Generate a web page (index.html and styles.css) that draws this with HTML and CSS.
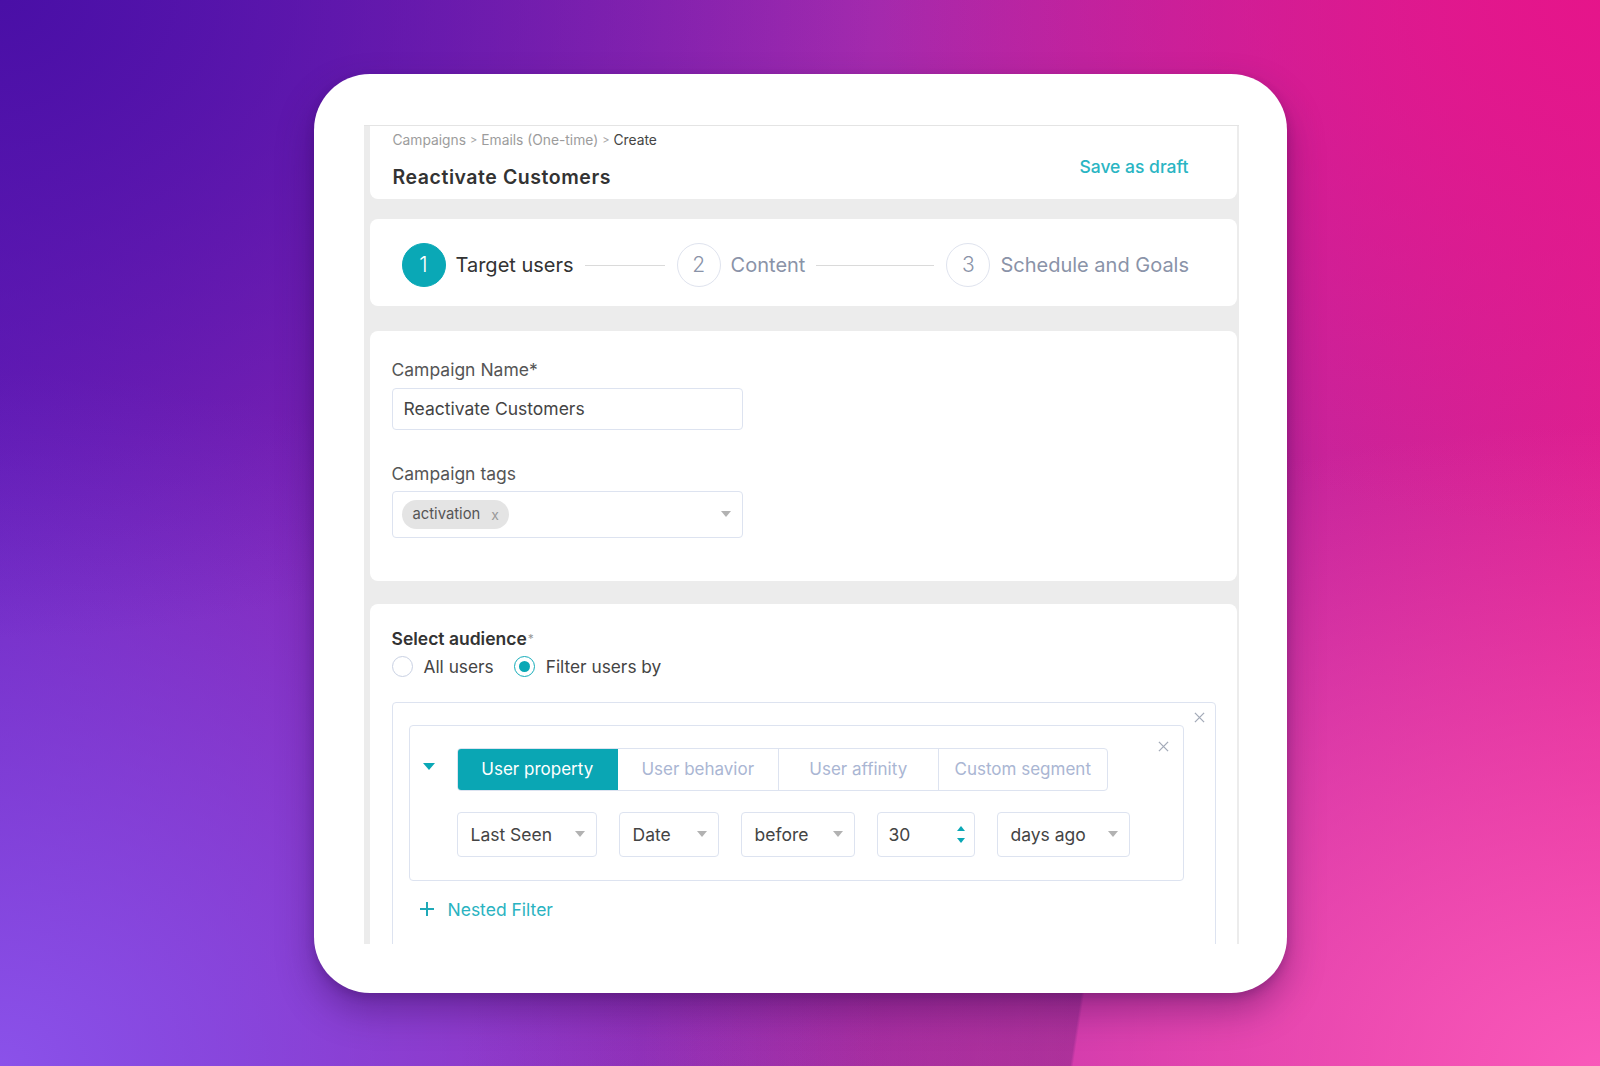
FILE: index.html
```html
<!DOCTYPE html>
<html lang="en">
<head>
<meta charset="utf-8">
<title>Reactivate Customers</title>
<link rel="stylesheet" href="styles.css">
</head>
<body>
<div class="device">
  <div class="app">
    <header class="card head">
      <div class="head-left">
        <div class="crumbs"><span class="crumb">Campaigns</span><span class="sep">&gt;</span><span class="crumb">Emails (One-time)</span><span class="sep">&gt;</span><span class="crumb cur">Create</span></div>
        <h1 class="title">Reactivate Customers</h1>
      </div>
      <a class="draft">Save as draft</a>
    </header>

    <section class="card steps">
      <div class="step active"><span class="num">1</span><span class="step-label">Target users</span></div>
      <span class="line line-a"></span>
      <div class="step"><span class="num">2</span><span class="step-label">Content</span></div>
      <span class="line line-b"></span>
      <div class="step"><span class="num">3</span><span class="step-label">Schedule and Goals</span></div>
    </section>

    <section class="card form">
      <div class="field-label">Campaign Name*</div>
      <div class="input">Reactivate Customers</div>
      <div class="field-label tags-label">Campaign tags</div>
      <div class="input tags">
        <span class="chip"><span>activation</span><span class="chip-x">x</span></span>
        <span class="caret"></span>
      </div>
    </section>

    <section class="card audience">
      <div class="aud-label">Select audience<span class="star">*</span></div>
      <div class="radios">
        <label class="radio"><span class="dot"></span><span>All users</span></label>
        <label class="radio checked"><span class="dot"></span><span>Filter users by</span></label>
      </div>
      <div class="filter-outer">
        <svg class="close outer-close" viewBox="0 0 12 12"><path d="M1 1L11 11M11 1L1 11"/></svg>
        <div class="filter-inner">
          <svg class="close inner-close" viewBox="0 0 12 12"><path d="M1 1L11 11M11 1L1 11"/></svg>
          <span class="toggle"></span>
          <div class="filter-body">
            <div class="tabs">
              <span class="tab on">User property</span>
              <span class="tab">User behavior</span>
              <span class="tab">User affinity</span>
              <span class="tab wide">Custom segment</span>
            </div>
            <div class="conds">
              <div class="sel w-last"><span>Last Seen</span><span class="caret"></span></div>
              <div class="sel w-date"><span>Date</span><span class="caret"></span></div>
              <div class="sel w-before"><span>before</span><span class="caret"></span></div>
              <div class="sel w-num"><span>30</span><span class="spin"><span class="up"></span><span class="down"></span></span></div>
              <div class="sel w-days"><span>days ago</span><span class="caret"></span></div>
            </div>
          </div>
        </div>
        <div class="nested">
          <svg class="plus" viewBox="0 0 16 16"><path d="M8 1V15M1 8H15"/></svg>
          <span>Nested Filter</span>
        </div>
      </div>
    </section>
  </div>
</div>
</body>
</html>
```

FILE: styles.css
```css
html, body {
  margin: 0;
  padding: 0;
}
body {
  position: relative;
  width: 1600px;
  height: 1066px;
  overflow: hidden;
  display: flex;
  align-items: center;
  justify-content: center;
  font-family: Inter, Lato, "Liberation Sans", sans-serif;
  background:
    radial-gradient(ellipse 55% 60% at 0% 0%, rgba(72, 14, 165, 0.95), rgba(72, 14, 165, 0) 100%),
    radial-gradient(ellipse 60% 60% at 100% 100%, rgba(250, 92, 188, 0.95), rgba(250, 92, 188, 0) 100%),
    radial-gradient(ellipse 55% 65% at 0% 100%, rgba(140, 84, 236, 0.95), rgba(140, 84, 236, 0) 100%),
    radial-gradient(ellipse 45% 50% at 100% 0%, rgba(230, 20, 138, 0.95), rgba(230, 20, 138, 0) 100%),
    linear-gradient(95deg, #6a20bc 0%, #a22aae 50%, #e0208f 100%);
}
/* darker swoosh behind the bottom of the device */
body::before {
  content: "";
  position: absolute;
  left: 0;
  top: 880px;
  width: 1600px;
  height: 186px;
  background: linear-gradient(98.8deg,
    rgba(60, 15, 100, 0) 0px,
    rgba(60, 15, 100, 0) 480px,
    rgba(60, 15, 100, 0.26) 1086px,
    rgba(60, 15, 100, 0) 1089px);
}

.device {
  position: relative;
  z-index: 1;
  width: 973px;
  height: 919px;
  box-sizing: border-box;
  padding: 51px 48px 49px 50px;
  background: #fff;
  border-radius: 56px;
  box-shadow: 0 18px 36px rgba(40, 0, 70, 0.35), 0 4px 10px rgba(40, 0, 70, 0.2);
}

.app {
  height: 100%;
  box-sizing: border-box;
  background: #ececec;
  border-top: 1px solid #e4e4e4;
  padding: 0 2px 0 6px;
  overflow: hidden;
  display: flex;
  flex-direction: column;
}

.card {
  background: #fff;
  border-radius: 8px;
  flex-shrink: 0;
}

/* header */
.head {
  border-radius: 0 0 8px 8px;
  height: 73px;
  box-sizing: border-box;
  padding: 5px 48px 0 23px;
  display: flex;
  justify-content: space-between;
  align-items: flex-start;
}
.crumbs {
  font-size: 13.8px;
  line-height: 18px;
  color: #9c9c9c;
  display: flex;
  align-items: center;
}
.sep {
  font-size: 11px;
  margin: 0 4px;
  color: #a5a5a5;
}
.crumb.cur { color: #444; }
.title {
  margin: 16px 0 0;
  font-size: 19.5px;
  line-height: 24px;
  font-weight: 600;
  letter-spacing: 0.55px;
  color: #333;
}
.draft {
  margin-top: 25px;
  font-size: 17.5px;
  line-height: 22px;
  color: #2ab5c3;
  font-weight: 500;
}

/* steps */
.steps {
  margin-top: 20px;
  height: 87px;
  box-sizing: border-box;
  padding: 24px 0 0 32px;
  display: flex;
  align-items: flex-start;
}
.step {
  display: flex;
  align-items: center;
}
.num {
  width: 44px;
  height: 44px;
  box-sizing: border-box;
  border-radius: 50%;
  border: 1.5px solid #dfe3ee;
  color: #8a93a8;
  font-size: 21px;
  font-weight: 300;
  display: flex;
  align-items: center;
  justify-content: center;
}
.step-label {
  margin-left: 10px;
  font-size: 20px;
  color: #8a93a8;
}
.step.active .num {
  background: #0aa8b6;
  border-color: #0aa8b6;
  color: #fff;
}
.step.active .step-label { color: #333; }
.line {
  height: 1px;
  background: #dadada;
  margin: 22px 12px 0 11px;
}
.line-a { width: 80px; }
.line-b { width: 118px; }

/* form */
.form {
  margin-top: 25px;
  height: 250px;
  box-sizing: border-box;
  padding: 29px 0 0 22px;
}
.field-label {
  font-size: 17.5px;
  line-height: 20px;
  color: #555;
  margin-bottom: 8px;
}
.tags-label {
  margin-top: 34px;
  margin-bottom: 7px;
}
.input {
  width: 351px;
  height: 42px;
  box-sizing: border-box;
  border: 1px solid #dde3f0;
  border-radius: 4px;
  padding: 0 11px;
  display: flex;
  align-items: center;
  font-size: 17.5px;
  color: #444;
}
.input.tags {
  height: 47px;
  padding: 0 11px 0 9px;
  justify-content: space-between;
}
.chip {
  height: 29px;
  box-sizing: border-box;
  padding: 0 10px 0 11px;
  border-radius: 15px;
  background: #e4e4e4;
  font-size: 14.8px;
  color: #555;
  display: inline-flex;
  align-items: center;
  gap: 11px;
}
.chip-x {
  color: #9a9a9a;
  font-size: 14px;
}
.caret {
  width: 0;
  height: 0;
  border-left: 5px solid transparent;
  border-right: 5px solid transparent;
  border-top: 6px solid #b2b2b2;
}

/* audience */
.audience {
  margin-top: 23px;
  flex: 1;
  border-radius: 8px 8px 0 0;
  padding: 25px 0 0 22px;
}
.aud-label {
  font-size: 17.5px;
  line-height: 20px;
  font-weight: 600;
  color: #333;
}
.star {
  font-weight: 400;
  color: #999;
  font-size: 12px;
  vertical-align: top;
  margin-left: 1px;
}
.radios {
  margin-top: 7px;
  display: flex;
  align-items: center;
  height: 22px;
}
.radio {
  display: flex;
  align-items: center;
  font-size: 17.3px;
  color: #444;
  margin-right: 20px;
}
.radio .dot {
  width: 21px;
  height: 21px;
  box-sizing: border-box;
  border-radius: 50%;
  border: 1.5px solid #c9d1e3;
  margin-right: 11px;
  display: flex;
  align-items: center;
  justify-content: center;
}
.radio.checked .dot {
  border-color: #13acb9;
}
.radio.checked .dot::after {
  content: "";
  width: 11px;
  height: 11px;
  border-radius: 50%;
  background: #0aa8b6;
}

.filter-outer {
  position: relative;
  margin-top: 24px;
  width: 824px;
  height: 260px;
  box-sizing: border-box;
  border: 1px solid #dde3f0;
  border-radius: 4px;
  padding: 22px 31px 0 16px;
}
.close {
  position: absolute;
  width: 11px;
  height: 11px;
  fill: none;
  stroke: #a3aab8;
  stroke-width: 1.4;
}
.outer-close { top: 9px; right: 10px; }
.inner-close { top: 15px; right: 14px; }

.filter-inner {
  position: relative;
  border: 1px solid #dde3f0;
  border-radius: 4px;
  padding: 22px 0 23px 13px;
  display: flex;
  align-items: flex-start;
}
.toggle {
  width: 0;
  height: 0;
  border-left: 6px solid transparent;
  border-right: 6px solid transparent;
  border-top: 7px solid #0aa8b6;
  margin-top: 15px;
  margin-right: 22px;
}
.tabs {
  display: flex;
  height: 43px;
  box-sizing: border-box;
  border: 1px solid #dde3f0;
  border-radius: 4px;
  overflow: hidden;
  width: 651px;
}
.tab {
  width: 161px;
  box-sizing: border-box;
  border-right: 1px solid #dde3f0;
  display: flex;
  align-items: center;
  justify-content: center;
  font-size: 17px;
  color: #aab6d3;
}
.tab.wide { width: 168px; border-right: 0; }
.tab.on {
  background: #0aa6b4;
  color: #fff;
  border-right-color: #0aa6b4;
}
.conds {
  margin-top: 21px;
  display: flex;
  gap: 22px;
}
.sel {
  height: 45px;
  box-sizing: border-box;
  border: 1px solid #dde3f0;
  border-radius: 4px;
  padding: 0 11px 0 13px;
  display: flex;
  align-items: center;
  justify-content: space-between;
  font-size: 17.5px;
  color: #444;
}
.w-last { width: 140px; }
.w-date { width: 100px; }
.w-before { width: 114px; }
.w-num { width: 98px; padding-left: 11px; padding-right: 9px; }
.w-days { width: 133px; }
.spin {
  display: flex;
  flex-direction: column;
  gap: 7px;
}
.spin .up {
  border-left: 4.5px solid transparent;
  border-right: 4.5px solid transparent;
  border-bottom: 5px solid #0aa8b6;
}
.spin .down {
  border-left: 4.5px solid transparent;
  border-right: 4.5px solid transparent;
  border-top: 5px solid #0aa8b6;
}

.nested {
  margin: 18px 0 0 10px;
  display: flex;
  align-items: center;
  gap: 13px;
  font-size: 17.5px;
  color: #2ab3c1;
}
.plus {
  width: 16px;
  height: 16px;
  fill: none;
  stroke: #1fa9b7;
  stroke-width: 2;
}
```
